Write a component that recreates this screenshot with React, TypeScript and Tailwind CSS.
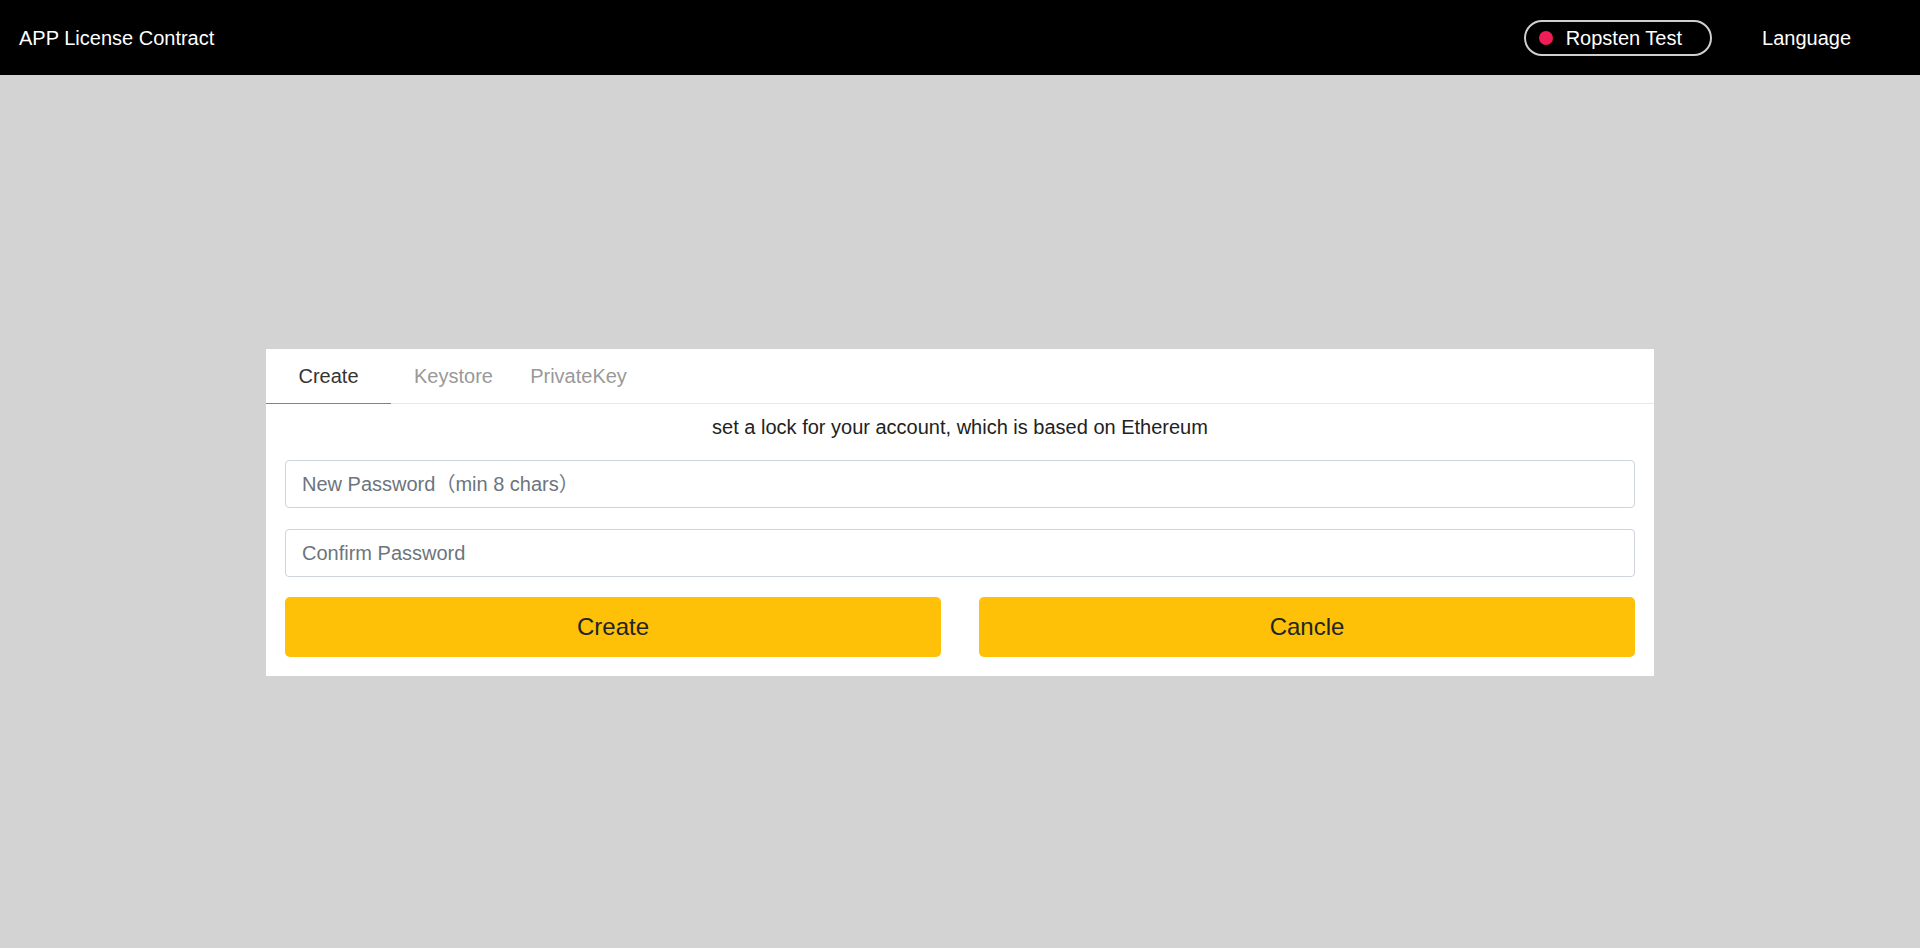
import { useState } from 'react'

const TABS = ['Create', 'Keystore', 'PrivateKey']

export default function App() {
  const [tab, setTab] = useState('Create')

  return (
    <div className="flex min-h-screen flex-col bg-[#d3d3d3] font-['Liberation_Sans','Noto_Sans_CJK_SC',Arial,sans-serif]">
      <header className="flex h-[75px] items-center justify-between bg-black pl-[19px] pr-[69px] text-white">
        <span className="text-[20px]">APP License Contract</span>
        <div className="flex items-center gap-[50px]">
          <div className="flex h-9 items-center gap-[13px] rounded-full border-2 border-[#cfcfcf] pl-[13px] pr-[28px] text-[20px]">
            <span className="h-[14px] w-[14px] rounded-full bg-[#ee1d55]" />
            <span>Ropsten Test</span>
          </div>
          <span className="text-[20px]">Language</span>
        </div>
      </header>

      <main className="flex flex-1 items-center justify-center pt-[2px]">
        <div className="w-[1388px] bg-white pb-[19px]">
          <div className="flex h-[55px] border-b border-[#e8e8e8]">
            {TABS.map(t => (
              <button
                key={t}
                onClick={() => setTab(t)}
                className={
                  t === tab
                    ? '-mb-px w-[125px] border-b border-[#f0564a] text-[20px] text-[#333]'
                    : 'w-[125px] text-[20px] text-[#999]'
                }
              >
                {t}
              </button>
            ))}
          </div>

          <p className="pt-[7px] text-center text-[20px] leading-[32px] text-[#222]">
            set a lock for your account, which is based on Ethereum
          </p>

          <div className="flex flex-col gap-[21px] px-[19px] pt-[17px]">
            <input
              type="password"
              placeholder="New Password（min 8 chars）"
              className="h-12 w-full rounded-[4px] border border-[#ced4da] px-4 text-[20px] text-[#495057] outline-none placeholder:text-[#6c757d]"
            />
            <input
              type="password"
              placeholder="Confirm Password"
              className="h-12 w-full rounded-[4px] border border-[#ced4da] px-4 text-[20px] text-[#495057] outline-none placeholder:text-[#6c757d]"
            />
          </div>

          <div className="mt-5 grid grid-cols-2">
            <div className="px-[19px]">
              <button className="h-[60px] w-full rounded-[5px] bg-[#fec107] text-[24px] text-[#212529]">Create</button>
            </div>
            <div className="px-[19px]">
              <button className="h-[60px] w-full rounded-[5px] bg-[#fec107] text-[24px] text-[#212529]">Cancle</button>
            </div>
          </div>
        </div>
      </main>
    </div>
  )
}
